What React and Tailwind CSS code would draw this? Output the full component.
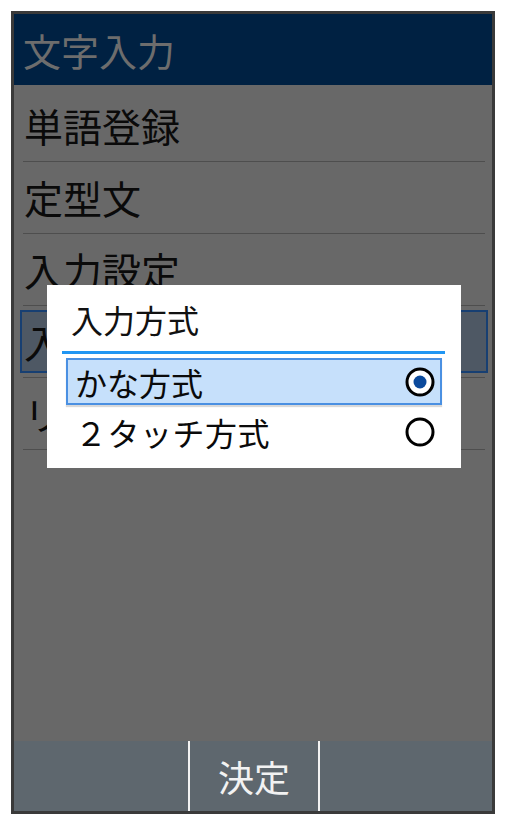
import React from "react";

const font = { fontFamily: '"Noto Sans CJK JP", "Noto Sans", sans-serif' };

const Radio = ({ checked }) => (
  <svg width="30" height="30" viewBox="0 0 30 30">
    <circle cx="15" cy="15" r="13" fill="white" stroke="#000" strokeWidth="3" />
    {checked && <circle cx="15" cy="15" r="6.5" fill="#0b4a9c" />}
  </svg>
);

const Row = ({ children }) => (
  <div className="mx-[9px] mr-[7px] h-[72px] border-b border-[#4e4e4e] flex items-center pl-[1px] text-[39px] leading-none text-[#0a0a0a]">
    {children}
  </div>
);

const App = () => {
  return (
    <div className="w-[507px] h-[826px] bg-white pt-[11px] pl-[11px]" style={font}>
      <div className="relative w-[484px] h-[803px] border-[3px] border-[#3a3a3a] bg-[#686868] flex flex-col">
        {/* header */}
        <div className="h-[71px] bg-[#002142] flex items-center pl-[9px] text-[38px] leading-none text-[#6d6d6d]">
          文字入力
        </div>

        {/* menu list */}
        <div className="flex-1 pt-[5px]">
          <Row>単語登録</Row>
          <Row>定型文</Row>
          <Row>入力設定</Row>
          <div className="mx-[9px] mr-[7px] h-[72px] border-b border-[#4e4e4e] pt-[4px]">
            <div className="-ml-[3px] -mr-[3px] h-[63px] border-2 border-[#173f72] bg-[#4e5864] flex items-center pl-[2px] text-[39px] leading-none text-[#0a0a0a]">
              入力方式
            </div>
          </div>
          <Row>リセット</Row>
        </div>

        {/* soft key bar */}
        <div className="h-[70px] bg-[#5e676e] flex">
          <div className="w-[174px]" />
          <div className="w-[2px] bg-[#f2f2f2]" />
          <div className="w-[128px] flex items-center justify-center text-[36px] leading-none text-[#f2f2f2] pb-[1px]">
            決定
          </div>
          <div className="w-[2px] bg-[#f2f2f2]" />
          <div className="flex-1" />
        </div>

        {/* dialog */}
        <div className="absolute left-[33px] top-[271px] w-[414px] h-[183px] bg-white flex flex-col">
          <div className="h-[66px] flex items-center pl-[24px] pt-[2px] text-[32px] leading-none text-[#111]">
            入力方式
          </div>
          <div className="ml-[15px] w-[383px] h-[3px] bg-[#2196f3]" />
          <div className="mt-[4px] ml-[19px] w-[376px] h-[47px] border-2 border-[#4a90e2] bg-[#c6e0fb] shadow-[0_2px_1px_rgba(0,0,0,0.15)] flex items-center justify-between pl-[7px] pr-[5px]">
            <span className="text-[32px] leading-none text-[#0a0a0a]">かな方式</span>
            <Radio checked />
          </div>
          <div className="mt-[3px] ml-[19px] w-[376px] h-[47px] flex items-center justify-between pl-[9px] pr-[7px]">
            <span className="text-[32px] tracking-[0.5px] leading-none text-[#0a0a0a]">２タッチ方式</span>
            <Radio />
          </div>
        </div>
      </div>
    </div>
  );
};

export default App;
